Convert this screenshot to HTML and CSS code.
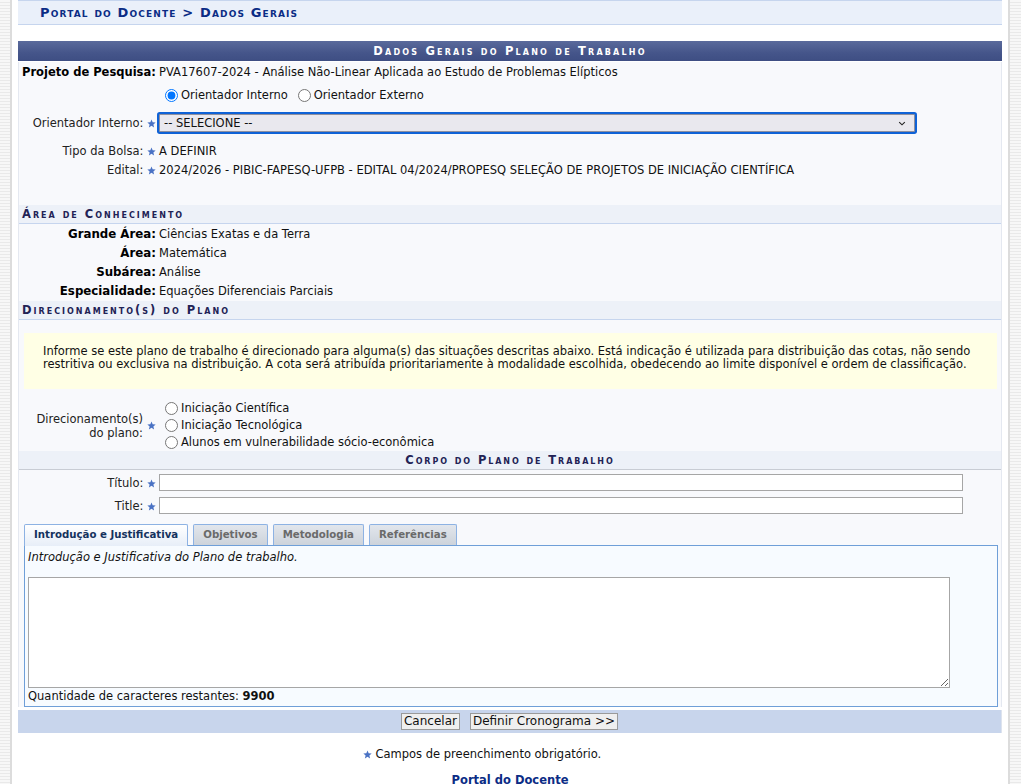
FILE: index.html
```html
<!DOCTYPE html>
<html lang="pt-BR">
<head>
<meta charset="utf-8">
<title>Portal do Docente - Dados Gerais</title>
<link rel="stylesheet" href="styles.css">
</head>
<body>
<div class="page">
  <div class="crumb">Portal do Docente &gt; Dados Gerais</div>

  <div class="box">
    <div class="caption">Dados Gerais do Plano de Trabalho</div>
    <div class="body">
      <div class="row r-proj">
        <div class="lbl lbl-b lbl-left">Projeto de Pesquisa:</div>
        <div class="val">PVA17607-2024 - Análise Não-Linear Aplicada ao Estudo de Problemas Elípticos</div>
      </div>
      <div class="row r-radio">
        <div class="lbl"></div>
        <div class="val radios-inline">
          <label class="radio"><input type="radio" name="ori" checked>Orientador Interno</label>
          <label class="radio"><input type="radio" name="ori">Orientador Externo</label>
        </div>
      </div>
      <div class="row r-select">
        <div class="lbl">Orientador Interno: <svg class="star" viewBox="0 0 10 10"><polygon points="5,0.5 6.3,3.6 9.6,3.8 7.1,6 7.9,9.4 5,7.6 2.1,9.4 2.9,6 0.4,3.8 3.7,3.6"/></svg></div>
        <div class="val">
          <span class="selwrap">
            <select class="sel"><option>-- SELECIONE --</option></select>
            <svg class="chev" viewBox="0 0 10 6"><path d="M1.5 1.2 L5 4.6 L8.5 1.2" fill="none" stroke="#222" stroke-width="1.4"/></svg>
          </span>
        </div>
      </div>
      <div class="row">
        <div class="lbl">Tipo da Bolsa: <svg class="star" viewBox="0 0 10 10"><polygon points="5,0.5 6.3,3.6 9.6,3.8 7.1,6 7.9,9.4 5,7.6 2.1,9.4 2.9,6 0.4,3.8 3.7,3.6"/></svg></div>
        <div class="val">A DEFINIR</div>
      </div>
      <div class="row">
        <div class="lbl">Edital: <svg class="star" viewBox="0 0 10 10"><polygon points="5,0.5 6.3,3.6 9.6,3.8 7.1,6 7.9,9.4 5,7.6 2.1,9.4 2.9,6 0.4,3.8 3.7,3.6"/></svg></div>
        <div class="val">2024/2026 - PIBIC-FAPESQ-UFPB - EDITAL 04/2024/PROPESQ SELEÇÃO DE PROJETOS DE INICIAÇÃO CIENTÍFICA</div>
      </div>

      <div class="subcap sub-first">Área de Conhecimento</div>
      <div class="row">
        <div class="lbl lbl-b">Grande Área:</div>
        <div class="val">Ciências Exatas e da Terra</div>
      </div>
      <div class="row">
        <div class="lbl lbl-b">Área:</div>
        <div class="val">Matemática</div>
      </div>
      <div class="row">
        <div class="lbl lbl-b">Subárea:</div>
        <div class="val">Análise</div>
      </div>
      <div class="row">
        <div class="lbl lbl-b">Especialidade:</div>
        <div class="val">Equações Diferenciais Parciais</div>
      </div>

      <div class="subcap sub-dir">Direcionamento(s) do Plano</div>
      <div class="notice">Informe se este plano de trabalho é direcionado para alguma(s) das situações descritas abaixo. Está indicação é utilizada para distribuição das cotas, não sendo restritiva ou exclusiva na distribuição. A cota será atribuída prioritariamente à modalidade escolhida, obedecendo ao limite disponível e ordem de classificação.</div>
      <div class="row r-dir">
        <div class="lbl lbl-dir"><span class="dir-text">Direcionamento(s)<br>do plano:</span> <svg class="star" viewBox="0 0 10 10"><polygon points="5,0.5 6.3,3.6 9.6,3.8 7.1,6 7.9,9.4 5,7.6 2.1,9.4 2.9,6 0.4,3.8 3.7,3.6"/></svg></div>
        <div class="val radios-stack">
          <label class="radio"><input type="radio" name="dir1">Iniciação Científica</label>
          <label class="radio"><input type="radio" name="dir2">Iniciação Tecnológica</label>
          <label class="radio"><input type="radio" name="dir3">Alunos em vulnerabilidade sócio-econômica</label>
        </div>
      </div>

      <div class="subcap subcap-center">Corpo do Plano de Trabalho</div>
      <div class="row r-input r-input-first">
        <div class="lbl">Título: <svg class="star" viewBox="0 0 10 10"><polygon points="5,0.5 6.3,3.6 9.6,3.8 7.1,6 7.9,9.4 5,7.6 2.1,9.4 2.9,6 0.4,3.8 3.7,3.6"/></svg></div>
        <div class="val"><input class="txt" type="text"></div>
      </div>
      <div class="row r-input">
        <div class="lbl">Title: <svg class="star" viewBox="0 0 10 10"><polygon points="5,0.5 6.3,3.6 9.6,3.8 7.1,6 7.9,9.4 5,7.6 2.1,9.4 2.9,6 0.4,3.8 3.7,3.6"/></svg></div>
        <div class="val"><input class="txt" type="text"></div>
      </div>

      <div class="tabs">
        <div class="tabbar">
          <div class="tab active">Introdução e Justificativa</div>
          <div class="tab">Objetivos</div>
          <div class="tab">Metodologia</div>
          <div class="tab">Referências</div>
        </div>
        <div class="panel">
          <div class="hint">Introdução e Justificativa do Plano de trabalho.</div>
          <textarea class="area"></textarea>
          <div class="count">Quantidade de caracteres restantes: <b>9900</b></div>
        </div>
      </div>
    </div>
    <div class="foot">
      <button class="btn">Cancelar</button>
      <button class="btn">Definir Cronograma &gt;&gt;</button>
    </div>
  </div>

  <div class="required"><svg class="star" viewBox="0 0 10 10"><polygon points="5,0.5 6.3,3.6 9.6,3.8 7.1,6 7.9,9.4 5,7.6 2.1,9.4 2.9,6 0.4,3.8 3.7,3.6"/></svg> Campos de preenchimento obrigatório.</div>
  <div class="back"><a href="#">Portal do Docente</a></div>
</div>
</body>
</html>
```
FILE: styles.css
```css
html, body {
  margin: 0;
  padding: 0;
}
body {
  background-color: #f4f4f4;
  background-image: repeating-linear-gradient(180deg, #f7f7f7 0, #f7f7f7 2px, #e9e9e9 2px, #e9e9e9 3px);
  font-family: "DejaVu Sans", Verdana, sans-serif;
  font-size: 11.5px;
  color: #111;
}
.page {
  margin-left: 10px;
  width: 984px;
  padding: 0 6px 30px;
  background: #fff;
  border-left: 2px solid #dcdcdc;
  border-right: 2px solid #dcdcdc;
  min-height: 800px;
}
.crumb {
  height: 23px;
  border-top: 1px solid #c6d5ee;
  border-bottom: 1px solid #c6d5ee;
  background: #eaf0fa;
  color: #0b2c85;
  font-weight: bold;
  font-size: 13px;
  font-variant: small-caps;
  line-height: 24px;
  padding-left: 22px;
  letter-spacing: 1.15px;
}
.box {
  margin-top: 16px;
}
.caption {
  height: 20px;
  line-height: 20px;
  background: linear-gradient(#5a6a9c, #45558a 60%, #3e4e83);
  color: #fff;
  text-align: center;
  font-weight: bold;
  font-variant: small-caps;
  font-size: 11.5px;
  letter-spacing: 2.2px;
}
.body {
  background: #f8f9fc;
  border-left: 1px solid #e4e8f0;
  border-right: 1px solid #e4e8f0;
}
.row {
  display: flex;
  align-items: center;
  min-height: 19px;
}
.lbl {
  width: 137px;
  flex: none;
  text-align: right;
  color: #222;
  white-space: nowrap;
}
.lbl-b {
  font-weight: bold;
  font-size: 11.8px;
  color: #000;
}
.lbl-left {
  text-align: left;
  padding-left: 3px;
  width: 134px;
  font-size: 11.5px;
}
.val {
  margin-left: 3px;
  color: #111;
}
.star {
  width: 9px;
  height: 9px;
  fill: #4a72c4;
  vertical-align: -1px;
}
.r-proj {
  margin-top: 1px;
  height: 20px;
}
.r-radio {
  height: 24px;
  margin-top: 1px;
}
.radios-inline {
  margin-left: 7px;
  display: flex;
  gap: 8px;
}
.radio {
  display: inline-flex;
  align-items: center;
  white-space: nowrap;
}
.radio input {
  margin: 0 3px 0 2px;
  width: 13px;
  height: 13px;
}
.r-select {
  height: 26px;
  margin-top: 3px;
  margin-bottom: 5px;
}
.selwrap {
  position: relative;
  display: inline-block;
}
.sel {
  -webkit-appearance: none;
  appearance: none;
  width: 756px;
  height: 18px;
  margin: 0;
  padding: 0 4px;
  border: 1px solid #8f8f9d;
  background: #e9e8ee;
  box-shadow: 0 0 0 2px #0f62d6;
  border-radius: 1px;
  font-family: "DejaVu Sans", Verdana, sans-serif;
  font-size: 11.5px;
  color: #111;
}
.chev {
  position: absolute;
  right: 9px;
  top: 7px;
  width: 8px;
  height: 5px;
}
.sub-first {
  margin-top: 26px;
}
.sub-dir {
  margin-top: 1px;
}
.subcap {
  height: 18px;
  line-height: 18px;
  background: #edf1f8;
  border-bottom: 1px solid #c6d5ee;
  color: #222255;
  font-weight: bold;
  font-variant: small-caps;
  font-size: 11.5px;
  letter-spacing: 2px;
  padding-left: 3px;
}
.subcap-center {
  text-align: center;
  padding-left: 0;
  letter-spacing: 1.9px;
  border-bottom-color: #c8ccd4;
}
.notice {
  margin: 13px 4px 11px 5px;
  background: #ffffe5;
  padding: 12px 12px 18px 19px;
  line-height: 13px;
  color: #111;
}
.r-dir {
  align-items: center;
}
.lbl-dir {
  display: flex;
  align-items: center;
  justify-content: flex-end;
  gap: 4px;
  line-height: 14px;
}
.dir-text {
  text-align: right;
  display: inline-block;
}
.radios-stack {
  display: flex;
  flex-direction: column;
  margin-left: 7px;
  line-height: 17px;
}
.r-input {
  height: 23px;
}
.r-input-first {
  margin-top: 1px;
}
.txt {
  width: 804px;
  height: 17px;
  box-sizing: border-box;
  border: 1px solid #a6a6a6;
  background: #fff;
  margin: 0;
  padding: 0 2px;
}
.tabs {
  margin: 6px 3px 3px 5px;
}
.tabbar {
  display: flex;
  gap: 5px;
  height: 22px;
  align-items: flex-end;
}
.tab {
  height: 20px;
  line-height: 20px;
  padding: 0 9px;
  border: 1px solid #8db2e3;
  border-bottom: none;
  background: linear-gradient(#e2e6ec, #cdd3db);
  color: #6a6a6a;
  font-weight: bold;
  font-size: 10.2px;
  border-radius: 2px 2px 0 0;
}
.tab.active {
  height: 21px;
  background: linear-gradient(#ffffff, #e7eef8);
  color: #15325e;
  position: relative;
  top: 1px;
}
.panel {
  border: 1px solid #6f9fd8;
  background: #f7fbff;
  padding: 4px 3px 2px 3px;
}
.hint {
  font-style: italic;
  line-height: 15px;
}
.area {
  display: block;
  width: 922px;
  height: 111px;
  box-sizing: border-box;
  margin: 12px 0 0 0;
  border: 1px solid #a6a6a6;
  background: #fff;
  resize: both;
}
.count {
  margin-top: 1px;
  line-height: 15px;
}
.foot {
  height: 23px;
  background: #c8d5ec;
  display: flex;
  justify-content: center;
  align-items: center;
  gap: 10px;
  border-right: 1px solid #dde3ee;
}
.btn {
  height: 17px;
  padding: 0 2px;
  border: 1px solid #9a9a9a;
  background: #efefef;
  font-family: "DejaVu Sans", Verdana, sans-serif;
  font-size: 12px;
  color: #111;
  border-radius: 0;
  line-height: 15px;
}
.required {
  margin-top: 14px;
  text-align: center;
  padding-right: 56px;
  line-height: 14px;
}
.back {
  margin-top: 12px;
  text-align: center;
}
.back a {
  color: #0b2c85;
  font-weight: bold;
  font-size: 11.5px;
  text-decoration: none;
}
```
